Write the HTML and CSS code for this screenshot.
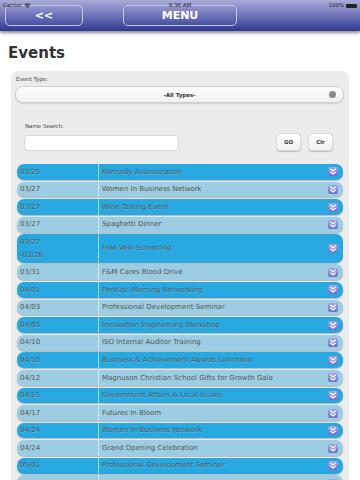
FILE: index.html
```html
<!DOCTYPE html>
<html lang="en">
<head>
    <meta charset="UTF-8">
    <meta name="viewport" content="width=device-width, initial-scale=1.0">
    <title>Events</title>
    <link rel="stylesheet" href="styles.css">
</head>
<body>

    <div class="topbar">
        <div class="status">
            <span class="carrier">Carrier
                <svg width="7" height="5" viewBox="0 0 7 5"><path d="M0.5 1.8 Q3.5 -0.6 6.5 1.8 M1.6 2.9 Q3.5 1.4 5.4 2.9" stroke="#222" stroke-width="0.9" fill="none"/><circle cx="3.5" cy="4.1" r="0.8" fill="#222"/></svg>
            </span>
            <span class="clock">8:36 AM</span>
            <span class="battery">100% <i class="batt"></i></span>
        </div>
        <button class="nav-btn back">&lt;&lt;</button>
        <button class="nav-btn menu">MENU</button>
    </div>

    <h1 class="page-title">Events</h1>

    <div class="panel">
        <div class="field-label">Event Type:</div>
        <div class="select">
            <span>-All Types-</span>
            <i class="knob"></i>
        </div>

        <div class="search">
            <div class="search-field">
                <div class="field-label">Name Search:</div>
                <input type="text" class="search-input">
            </div>
            <button class="small-btn">GO</button>
            <button class="small-btn">Clr</button>
        </div>

        <div class="events">
            <div class="row dark"><div class="date">03/25</div><div class="title">Kennedy Assassination</div><i class="more"></i></div>
            <div class="row light"><div class="date">03/27</div><div class="title">Women In Business Network</div><i class="more"></i></div>
            <div class="row dark"><div class="date">03/27</div><div class="title">Wine Tasting Event</div><i class="more"></i></div>
            <div class="row light"><div class="date">03/27</div><div class="title">Spaghetti Dinner</div><i class="more"></i></div>
            <div class="row dark"><div class="date">03/27<br>-03/28</div><div class="title">Free Vein Screening</div><i class="more"></i></div>
            <div class="row light"><div class="date">03/31</div><div class="title">F&amp;M Cares Blood Drive</div><i class="more"></i></div>
            <div class="row dark"><div class="date">04/01</div><div class="title">PerkUp! Morning Networking</div><i class="more"></i></div>
            <div class="row light"><div class="date">04/03</div><div class="title">Professional Development Seminar</div><i class="more"></i></div>
            <div class="row dark"><div class="date">04/03</div><div class="title">Innovation Engineering Workshop</div><i class="more"></i></div>
            <div class="row light"><div class="date">04/10</div><div class="title">ISO Internal Auditor Training</div><i class="more"></i></div>
            <div class="row dark"><div class="date">04/10</div><div class="title">Business &amp; Achievement Awards Luncheon</div><i class="more"></i></div>
            <div class="row light"><div class="date">04/12</div><div class="title">Magnuson Christian School Gifts for Growth Gala</div><i class="more"></i></div>
            <div class="row dark"><div class="date">04/15</div><div class="title">Government Affairs &amp; Local Issues</div><i class="more"></i></div>
            <div class="row light"><div class="date">04/17</div><div class="title">Futures In Bloom</div><i class="more"></i></div>
            <div class="row dark"><div class="date">04/24</div><div class="title">Women In Business Network</div><i class="more"></i></div>
            <div class="row light"><div class="date">04/24</div><div class="title">Grand Opening Celebration</div><i class="more"></i></div>
            <div class="row dark"><div class="date">05/01</div><div class="title">Professional Development Seminar</div><i class="more"></i></div>
            <div class="row light"><div class="date">&nbsp;</div><div class="title"></div><i class="more"></i></div>
        </div>
    </div>

</body>
</html>
```

FILE: styles.css
```css
html, body {
    margin: 0;
    overflow: hidden;
}
body {
    font-family: "DejaVu Sans", Verdana, sans-serif;
    background: #fff;
    color: #333;
}

/* top bar */
.topbar {
    position: relative;
    height: 31px;
    box-sizing: border-box;
    padding: 5px 5px 0;
    display: flex;
    background: linear-gradient(#a9acd9, #7479bd 45%, #2f3992);
    box-shadow: 0 2px 3px rgba(0, 0, 0, 0.45);
}
.status {
    position: absolute;
    left: 3px;
    right: 3px;
    top: 1px;
    display: flex;
    justify-content: space-between;
    font-size: 5.5px;
    line-height: 8px;
    color: #222;
}
.carrier svg {
    vertical-align: -1px;
}
.clock {
    position: absolute;
    left: 0;
    right: 0;
    text-align: center;
}
.batt {
    display: inline-block;
    width: 11px;
    height: 4px;
    background: #222;
    border-radius: 1px;
    vertical-align: -0.5px;
}
.nav-btn {
    height: 21px;
    border: 1px solid #c6c8e0;
    border-radius: 5px;
    background: transparent;
    color: #fff;
    font-family: "DejaVu Sans", sans-serif;
    font-weight: bold;
    font-size: 11px;
    padding: 0;
}
.back {
    width: 78px;
}
.menu {
    width: 114px;
    margin-left: 40px;
}

.page-title {
    margin: 13px 0 9px 8px;
    font-size: 15px;
    line-height: 18px;
    color: #333;
}

/* filter panel */
.panel {
    margin: 0 11px;
    padding: 4px 5px 0 4px;
    background: #ececec;
    border-radius: 8px 8px 0 0;
    min-height: 420px;
}
.field-label {
    font-size: 5.5px;
    line-height: 9px;
    color: #444;
    padding-left: 1px;
}
.select {
    position: relative;
    margin-top: 2px;
    height: 17px;
    box-sizing: border-box;
    border: 1px solid #cfcfcf;
    border-radius: 8px;
    background: linear-gradient(#fdfdfd, #f1f1f1);
    box-shadow: 0 1px 1px rgba(0, 0, 0, 0.12);
    display: flex;
    align-items: center;
    justify-content: center;
    font-size: 5.5px;
    font-weight: bold;
    color: #333;
}
.knob {
    position: absolute;
    right: 7px;
    top: 4px;
    width: 7px;
    height: 7px;
    border-radius: 50%;
    background: #8a8a8a;
}
.search {
    display: flex;
    align-items: flex-end;
    margin-top: 19px;
    padding: 0 11px 0 9px;
}
.search-field {
    flex: 1;
}
.search-field .field-label {
    margin-bottom: 4px;
}
.search-input {
    display: block;
    width: 155px;
    height: 16px;
    box-sizing: border-box;
    border: 1px solid #d6d6d6;
    border-radius: 4px;
    background: #fff;
    margin: 0;
}
.small-btn {
    width: 25px;
    height: 18px;
    margin-left: 7px;
    padding: 0;
    border: 1px solid #d8d8d8;
    border-radius: 4px;
    background: linear-gradient(#fff, #f2f2f2);
    box-shadow: 0 1px 1px rgba(0, 0, 0, 0.2);
    font-family: "DejaVu Sans", sans-serif;
    font-size: 5.5px;
    font-weight: bold;
    color: #333;
}

/* event list */
.events {
    margin-top: 13px;
    padding: 0 1px 0 2px;
}
.row {
    display: flex;
    align-items: center;
    border-radius: 7px;
    margin-bottom: 1.8px;
    font-size: 7px;
    line-height: 12.6px;
    color: #555;
    box-shadow: 0 1px 1px rgba(0, 0, 0, 0.22);
}
.row.dark {
    background: #28a8e0;
    text-shadow: 0 1px 0 rgba(255, 255, 255, 0.25);
}
.row.light {
    background: #9dcde2;
}
.date {
    width: 78px;
    flex: none;
    align-self: stretch;
    padding: 1.6px 0 1.6px 3px;
    border-right: 1px solid rgba(255, 255, 255, 0.55);
}
.title {
    flex: 1;
    padding-left: 3px;
    white-space: nowrap;
    overflow: hidden;
}
.more {
    flex: none;
    width: 10px;
    height: 9px;
    margin-right: 5px;
    border-radius: 2px;
    background:
        url("data:image/svg+xml,%3Csvg xmlns='http://www.w3.org/2000/svg' viewBox='0 0 10 9'%3E%3Cpath d='M2.3 1.8 5 3.9 7.7 1.8M2.3 4.8 5 6.9 7.7 4.8' stroke='white' stroke-width='1.2' fill='none'/%3E%3C/svg%3E") center / 10px 9px no-repeat,
        linear-gradient(#a3a7e6, #6d72c9);
}
```
